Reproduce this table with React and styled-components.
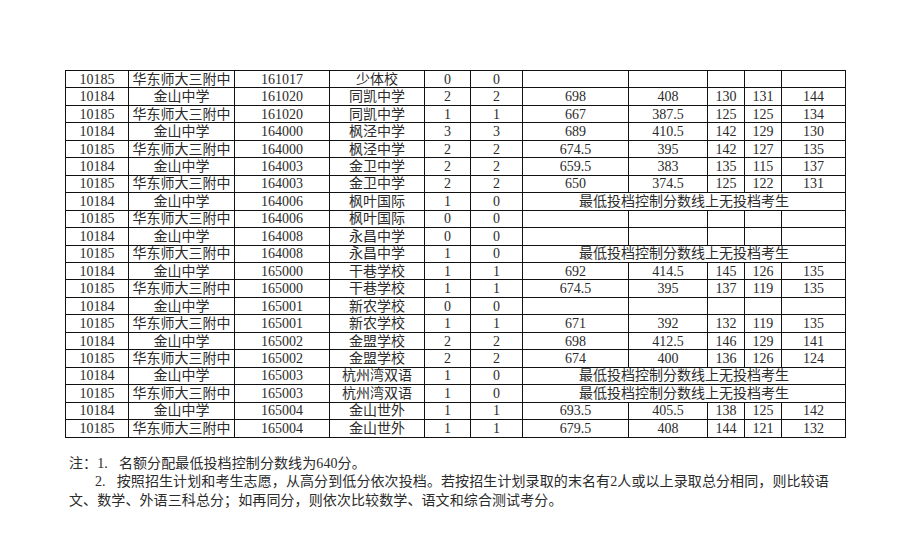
import React from 'react'
import styled, { createGlobalStyle } from 'styled-components'

//---------------------------------------------
//   Data
//---------------------------------------------
const NONE = '最低投档控制分数线上无投档考生'
const HS = '华东师大三附中'
const JS = '金山中学'

// scores: null -> empty cells, 'none' -> merged notice, array -> 5 values
const rows = [
  ['10185', HS, '161017', '少体校', '0', '0', null],
  ['10184', JS, '161020', '同凯中学', '2', '2', ['698', '408', '130', '131', '144']],
  ['10185', HS, '161020', '同凯中学', '1', '1', ['667', '387.5', '125', '125', '134']],
  ['10184', JS, '164000', '枫泾中学', '3', '3', ['689', '410.5', '142', '129', '130']],
  ['10185', HS, '164000', '枫泾中学', '2', '2', ['674.5', '395', '142', '127', '135']],
  ['10184', JS, '164003', '金卫中学', '2', '2', ['659.5', '383', '135', '115', '137']],
  ['10185', HS, '164003', '金卫中学', '2', '2', ['650', '374.5', '125', '122', '131']],
  ['10184', JS, '164006', '枫叶国际', '1', '0', 'none'],
  ['10185', HS, '164006', '枫叶国际', '0', '0', null],
  ['10184', JS, '164008', '永昌中学', '0', '0', null],
  ['10185', HS, '164008', '永昌中学', '1', '0', 'none'],
  ['10184', JS, '165000', '干巷学校', '1', '1', ['692', '414.5', '145', '126', '135']],
  ['10185', HS, '165000', '干巷学校', '1', '1', ['674.5', '395', '137', '119', '135']],
  ['10184', JS, '165001', '新农学校', '0', '0', null],
  ['10185', HS, '165001', '新农学校', '1', '1', ['671', '392', '132', '119', '135']],
  ['10184', JS, '165002', '金盟学校', '2', '2', ['698', '412.5', '146', '129', '141']],
  ['10185', HS, '165002', '金盟学校', '2', '2', ['674', '400', '136', '126', '124']],
  ['10184', JS, '165003', '杭州湾双语', '1', '0', 'none'],
  ['10185', HS, '165003', '杭州湾双语', '1', '0', 'none'],
  ['10184', JS, '165004', '金山世外', '1', '1', ['693.5', '405.5', '138', '125', '142']],
  ['10185', HS, '165004', '金山世外', '1', '1', ['679.5', '408', '144', '121', '132']],
]

const widths = [63, 106, 95, 95, 46, 52, 106, 79, 37, 37, 64]

//----------------------------//
//   Styles
//----------------------------//
const GlobalStyle = createGlobalStyle`
  html, body {
    margin: 0;
    background: #fff;
  }
  body {
    font-family: "Liberation Serif", "Noto Sans CJK SC", serif;
    color: #2b2b2b;
  }
`

const Page = styled.div`
  width: 915px;
  height: 546px;
  padding: 70px 0 0 65px;
  box-sizing: border-box;
  display: flex;
  flex-direction: column;
`

const Sheet = styled.table`
  table-layout: fixed;
  border-collapse: collapse;
  width: 780px;
  border: 1px solid #111;
`

const Row = styled.tr`
  height: 17.46px;
`

const Cell = styled.td`
  border: 1px solid #111;
  padding: 0;
  text-align: center;
  vertical-align: middle;
  font-size: 14px;
  line-height: 15px;
  white-space: nowrap;
  overflow: hidden;
  color: #2b2b2b;
`

const Notes = styled.div`
  margin-top: 17px;
  padding-left: 4px;
  display: flex;
  flex-direction: column;
`

const NoteLine = styled.div`
  font-size: 14px;
  line-height: 18.5px;
  letter-spacing: 0.1px;
  padding-left: ${(p) => (p.$indent ? '26px' : '0')};
  white-space: nowrap;
  color: #2b2b2b;
`

const Num = styled.span`
  margin-right: ${(p) => p.$gap || '0'};
`

// ---------------------------------------------
//   Return
//---------------------------------------------
const App = () => {
  return (
    <Page>
      <GlobalStyle />
      <Sheet>
        <colgroup>
          {widths.map((w, i) => (
            <col key={i} style={{ width: w }} />
          ))}
        </colgroup>
        <tbody>
          {rows.map((r, i) => (
            <Row key={i}>
              {r.slice(0, 6).map((v, j) => (
                <Cell key={j}>{v}</Cell>
              ))}
              {r[6] === 'none' && <Cell colSpan={5}>{NONE}</Cell>}
              {r[6] === null && [0, 1, 2, 3, 4].map((k) => <Cell key={'e' + k} />)}
              {Array.isArray(r[6]) && r[6].map((v, k) => <Cell key={'s' + k}>{v}</Cell>)}
            </Row>
          ))}
        </tbody>
      </Sheet>
      <Notes>
        <NoteLine>
          注：<Num $gap="11px">1.</Num>名额分配最低投档控制分数线为640分。
        </NoteLine>
        <NoteLine $indent>
          <Num $gap="11px">2.</Num>按照招生计划和考生志愿，从高分到低分依次投档。若按招生计划录取的末名有2人或以上录取总分相同，则比较语
        </NoteLine>
        <NoteLine>文、数学、外语三科总分；如再同分，则依次比较数学、语文和综合测试考分。</NoteLine>
      </Notes>
    </Page>
  )
}

export default App
